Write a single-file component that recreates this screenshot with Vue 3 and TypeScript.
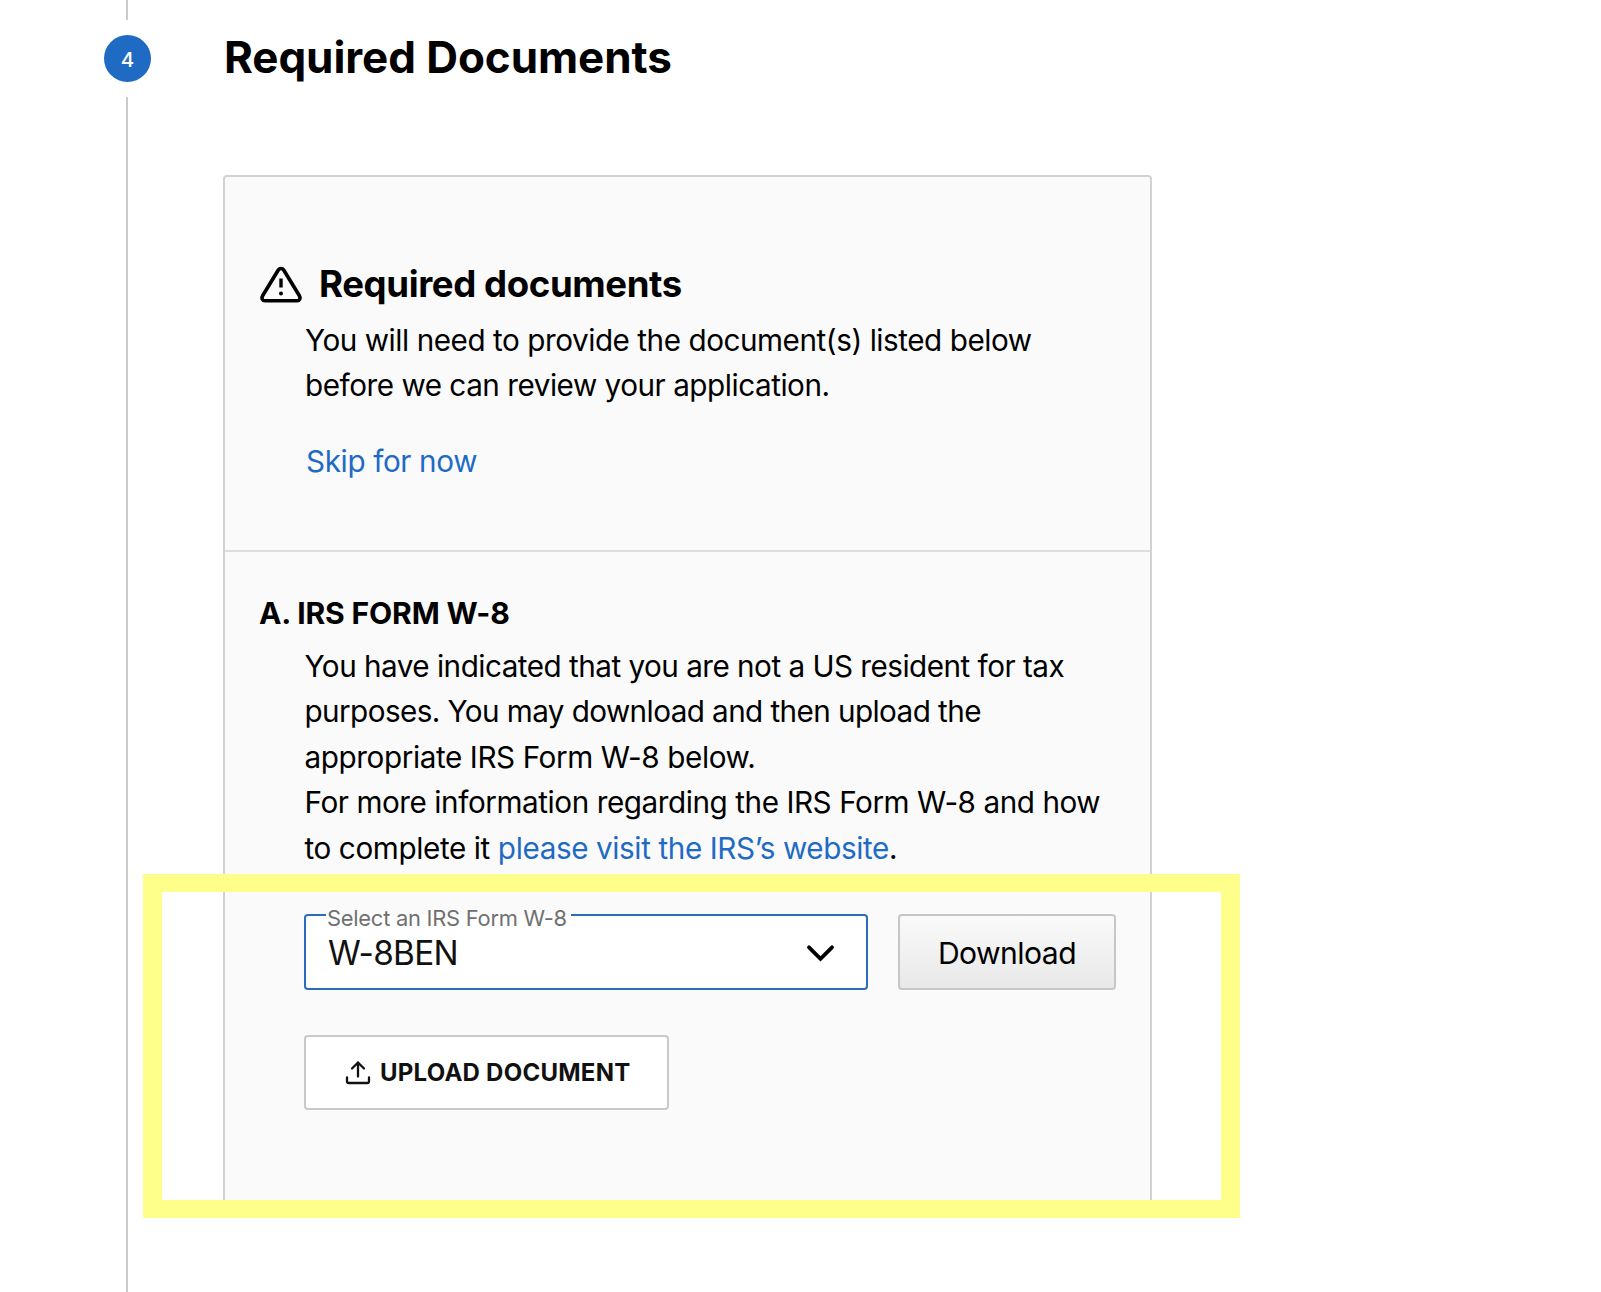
<script setup lang="ts">
import { ref } from 'vue'

interface Line {
  text: string
  tracking: number
}

const step = 4
const selectedForm = ref('W-8BEN')
const intro: Line[] = [
  { text: 'You will need to provide the document(s) listed below', tracking: -0.46 },
  { text: 'before we can review your application.', tracking: -0.48 },
]
const details: Line[] = [
  { text: 'You have indicated that you are not a US resident for tax', tracking: -0.52 },
  { text: 'purposes. You may download and then upload the', tracking: -0.59 },
  { text: 'appropriate IRS Form W-8 below.', tracking: -0.41 },
  { text: 'For more information regarding the IRS Form W-8 and how', tracking: -0.44 },
]
</script>

<template>
  <div class="page">
    <aside class="rail">
      <span class="rail-line rail-top"></span>
      <span class="badge">{{ step }}</span>
      <span class="rail-line rail-rest"></span>
    </aside>

    <main class="content">
      <h1 class="title">Required Documents</h1>

      <section class="card">
        <div class="intro">
          <h2 class="intro-title">
            <svg class="warn" width="42" height="38" viewBox="0 0 42 38" fill="none" stroke="#000" stroke-linecap="round" stroke-linejoin="round">
              <path d="M18.300 4 2.600 29.800C1.200 32.300 2.400 34.700 5 34.700h32c2.600 0 3.800-2.400 2.400-4.900L23.700 4c-1.300-2.100-4.100-2.100-5.400 0Z" stroke-width="3.600" />
              <path d="M21 12.500v9" stroke-width="3.400" stroke-linecap="butt" />
              <circle cx="21" cy="27.400" r="2" fill="#000" stroke="none" />
            </svg>
            <span>Required documents</span>
          </h2>
          <p class="text">
            <span v-for="line in intro" :key="line.text" class="line" :style="{ letterSpacing: line.tracking + 'px' }">{{ line.text }}</span>
          </p>
          <a class="skip">Skip for now</a>
        </div>

        <div class="form">
          <h3 class="form-title">A. IRS FORM W-8</h3>
          <p class="text details">
            <span v-for="line in details" :key="line.text" class="line" :style="{ letterSpacing: line.tracking + 'px' }">{{ line.text }}</span>
            <span class="line">to complete it <a>please visit the IRS’s website</a>.</span>
          </p>

          <div class="controls">
            <div class="select">
              <span class="label">Select an IRS Form W-8</span>
              <span class="value">{{ selectedForm }}</span>
              <svg class="chevron" width="29" height="20" viewBox="0 0 29 20" fill="none" stroke="#000" stroke-width="3.800" stroke-linecap="round">
                <path d="M3 4.300 14.500 15.800 26 4.300" />
              </svg>
            </div>
            <button class="download" type="button">Download</button>
          </div>

          <button class="upload" type="button">
            <svg width="26" height="25" viewBox="0 0 26 25" fill="none" stroke="#111" stroke-width="2.300" stroke-linecap="round" stroke-linejoin="round">
              <path d="M13 16.500V2.500M7 8.500l6-6 6 6" />
              <path d="M2 17.500v3.700a1.800 1.800 0 0 0 1.800 1.800h18.400a1.800 1.800 0 0 0 1.800-1.800v-3.700" />
            </svg>
            <span>UPLOAD DOCUMENT</span>
          </button>
        </div>
      </section>
    </main>

    <div class="highlight"></div>
  </div>
</template>

<style>
body {
  background: #fff;
}
</style>

<style scoped>
* {
  box-sizing: border-box;
}
.page {
  position: relative;
  display: flex;
  width: 1601px;
  height: 1292px;
  overflow: hidden;
  background: #fff;
  color: #000;
  font-family: Inter, sans-serif;
}
h1,
h2,
h3,
p {
  margin: 0;
}
.rail {
  flex: none;
  display: flex;
  flex-direction: column;
  align-items: center;
  gap: 15px;
  width: 223px;
  padding-left: 32px;
}
.rail-line {
  width: 2px;
  margin-right: 1px;
  background: #cbcbcb;
}
.rail-top {
  height: 20px;
}
.rail-rest {
  flex: 1;
}
.badge {
  display: flex;
  align-items: center;
  justify-content: center;
  width: 47px;
  height: 47px;
  padding-top: 2px;
  border-radius: 50%;
  background: #1f6bc4;
  color: #fff;
  font-size: 20.5px;
  font-weight: 500;
}
.content {
  width: 929px;
}
.title {
  margin-top: 27px;
  line-height: 60px;
  font-size: 44px;
  font-weight: 700;
  text-indent: 1px;
  letter-spacing: -0.07px;
  white-space: nowrap;
}
.card {
  height: 1035px;
  margin-top: 88px;
  border: 2px solid #d2d2d2;
  border-radius: 4px;
  background: #fafafa;
}
.intro {
  height: 375px;
  padding: 83px 0 0 35px;
  border-bottom: 2px solid #dedede;
}
.intro-title {
  display: flex;
  align-items: center;
  gap: 17px;
  line-height: 48px;
  font-size: 36.6px;
  font-weight: 700;
  letter-spacing: -0.39px;
}
.warn {
  margin-top: 2px;
}
.text {
  margin: 10px 0 0 45px;
  font-size: 29.7px;
  line-height: 45.4px;
  white-space: nowrap;
}
.line {
  display: block;
}
a {
  color: #1f6bc4;
}
.skip {
  display: block;
  margin: 30px 0 0 46px;
  font-size: 29.7px;
  line-height: 45.4px;
  letter-spacing: -0.38px;
}
.form {
  padding: 41px 34px 0;
}
.form-title {
  line-height: 40px;
  font-size: 30.1px;
  font-weight: 700;
  letter-spacing: -0.17px;
}
.details {
  margin: 11px 0 0 45.5px;
  letter-spacing: -0.4px;
}
.controls {
  display: flex;
  gap: 30px;
  margin: 43px 0 0 45px;
}
.select {
  position: relative;
  display: flex;
  align-items: center;
  justify-content: space-between;
  width: 564px;
  height: 76px;
  padding: 2px 31px 0 22px;
  border: 2px solid #2a6dbb;
  border-radius: 4px;
  background: #fff;
}
.label {
  position: absolute;
  top: -13px;
  left: 20px;
  padding: 0 4px 0 1px;
  background: linear-gradient(#fafafa 12px, #fff 12px);
  color: #707070;
  font-size: 21.9px;
  line-height: 30px;
  letter-spacing: -0.25px;
  white-space: nowrap;
}
.value {
  color: #111;
  font-size: 33.3px;
  letter-spacing: -0.65px;
}
.download {
  width: 218px;
  height: 76px;
  padding: 1px 0 0;
  border: 2px solid #c6c6c6;
  border-radius: 4px;
  background: linear-gradient(#fafafa, #e8e8e8);
  color: #000;
  font-family: inherit;
  font-size: 30.1px;
  letter-spacing: -0.55px;
}
.upload {
  display: flex;
  align-items: center;
  gap: 9px;
  width: 365px;
  height: 75px;
  margin: 45px 0 0 45px;
  padding: 0 0 1px 39px;
  border: 2px solid #c9c9c9;
  border-radius: 4px;
  background: #fff;
  color: #111;
  font-family: inherit;
  font-size: 24px;
  font-weight: 700;
  letter-spacing: 0.24px;
  white-space: nowrap;
}
.highlight {
  position: absolute;
  top: 874px;
  left: 143px;
  width: 1097px;
  height: 344px;
  border: 18px solid #feff8b;
  border-right-width: 19px;
  border-left-width: 19px;
}
</style>
